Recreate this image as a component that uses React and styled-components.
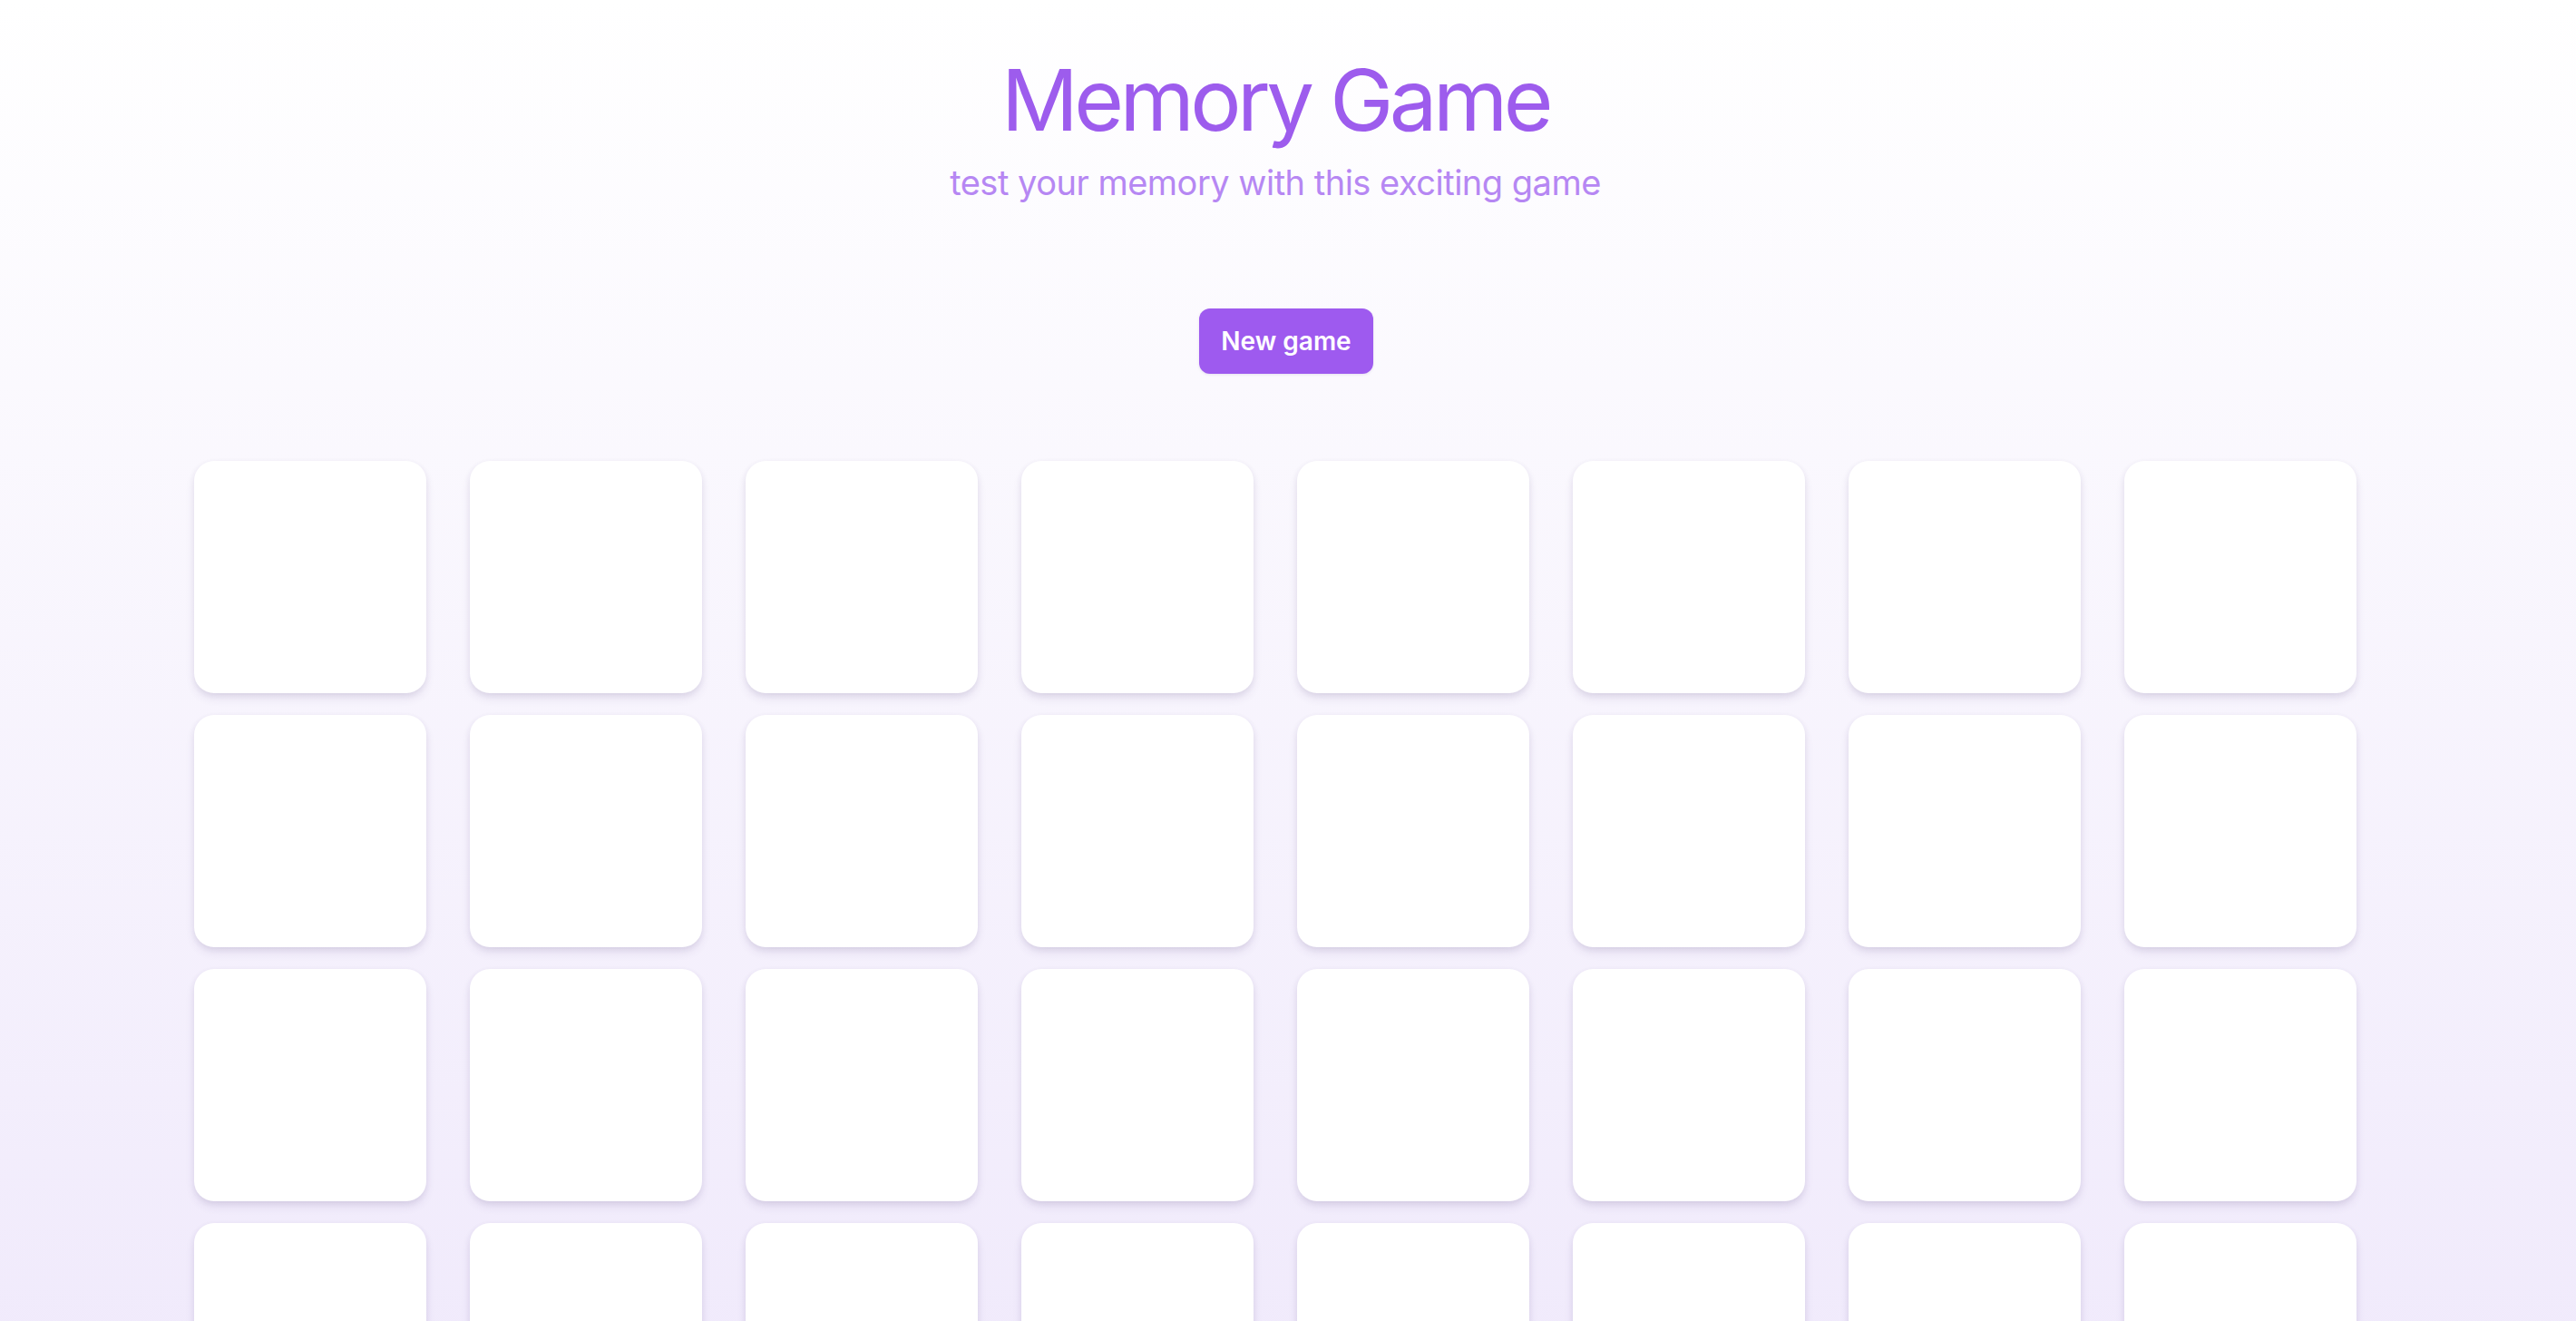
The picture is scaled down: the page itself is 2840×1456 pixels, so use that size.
import React from 'react';
import styled, { createGlobalStyle } from 'styled-components';

const GlobalStyle = createGlobalStyle`
	* {
		box-sizing: border-box;
	}

	body {
		margin: 0;
		font-family: Inter, 'Noto Sans', sans-serif;
	}
`;

const Page = styled.div`
	min-height: 100vh;
	padding: 63px 28px 96px 0;
	background: linear-gradient(180deg, #ffffff 0%, #eee7fb 100%);
	display: flex;
	flex-direction: column;
	align-items: center;
`;

const Title = styled.h1`
	margin: 0;
	font-size: 94px;
	line-height: 1;
	font-weight: 400;
	letter-spacing: -4.6px;
	color: #9d5ced;
`;

const Subtitle = styled.p`
	margin: 25px 0 0;
	font-size: 38px;
	line-height: 1;
	font-weight: 400;
	letter-spacing: -0.5px;
	color: #b687f3;
`;

const Actions = styled.div`
	display: flex;
	justify-content: center;
	margin-top: 120px;
	padding-left: 24px;
`;

const Button = styled.button`
	height: 72px;
	padding: 0 24px;
	border: none;
	border-radius: 12px;
	background: #9e5aef;
	color: #ffffff;
	font-family: Inter, sans-serif;
	font-size: 28px;
	font-weight: 600;
	cursor: pointer;
	box-shadow: 0 1px 3px rgba(80, 40, 140, 0.12);
`;

const Board = styled.div`
	display: grid;
	grid-template-columns: repeat(8, 256px);
	column-gap: 48px;
	row-gap: 24px;
	margin-top: 96px;
`;

const Card = styled.div`
	width: 256px;
	height: 256px;
	border-radius: 22px;
	background: #ffffff;
	box-shadow: 0 6px 12px -2px rgba(70, 50, 110, 0.14),
		0 2px 6px rgba(70, 50, 110, 0.07);
`;

const cards = Array.from({ length: 32 }, (_, i) => i);

export default function App() {
	return (
		<>
			<GlobalStyle />
			<Page>
				<Title>Memory Game</Title>
				<Subtitle>test your memory with this exciting game</Subtitle>
				<Actions>
					<Button>New game</Button>
				</Actions>
				<Board>
					{cards.map((id) => (
						<Card key={id} />
					))}
				</Board>
			</Page>
		</>
	);
}
